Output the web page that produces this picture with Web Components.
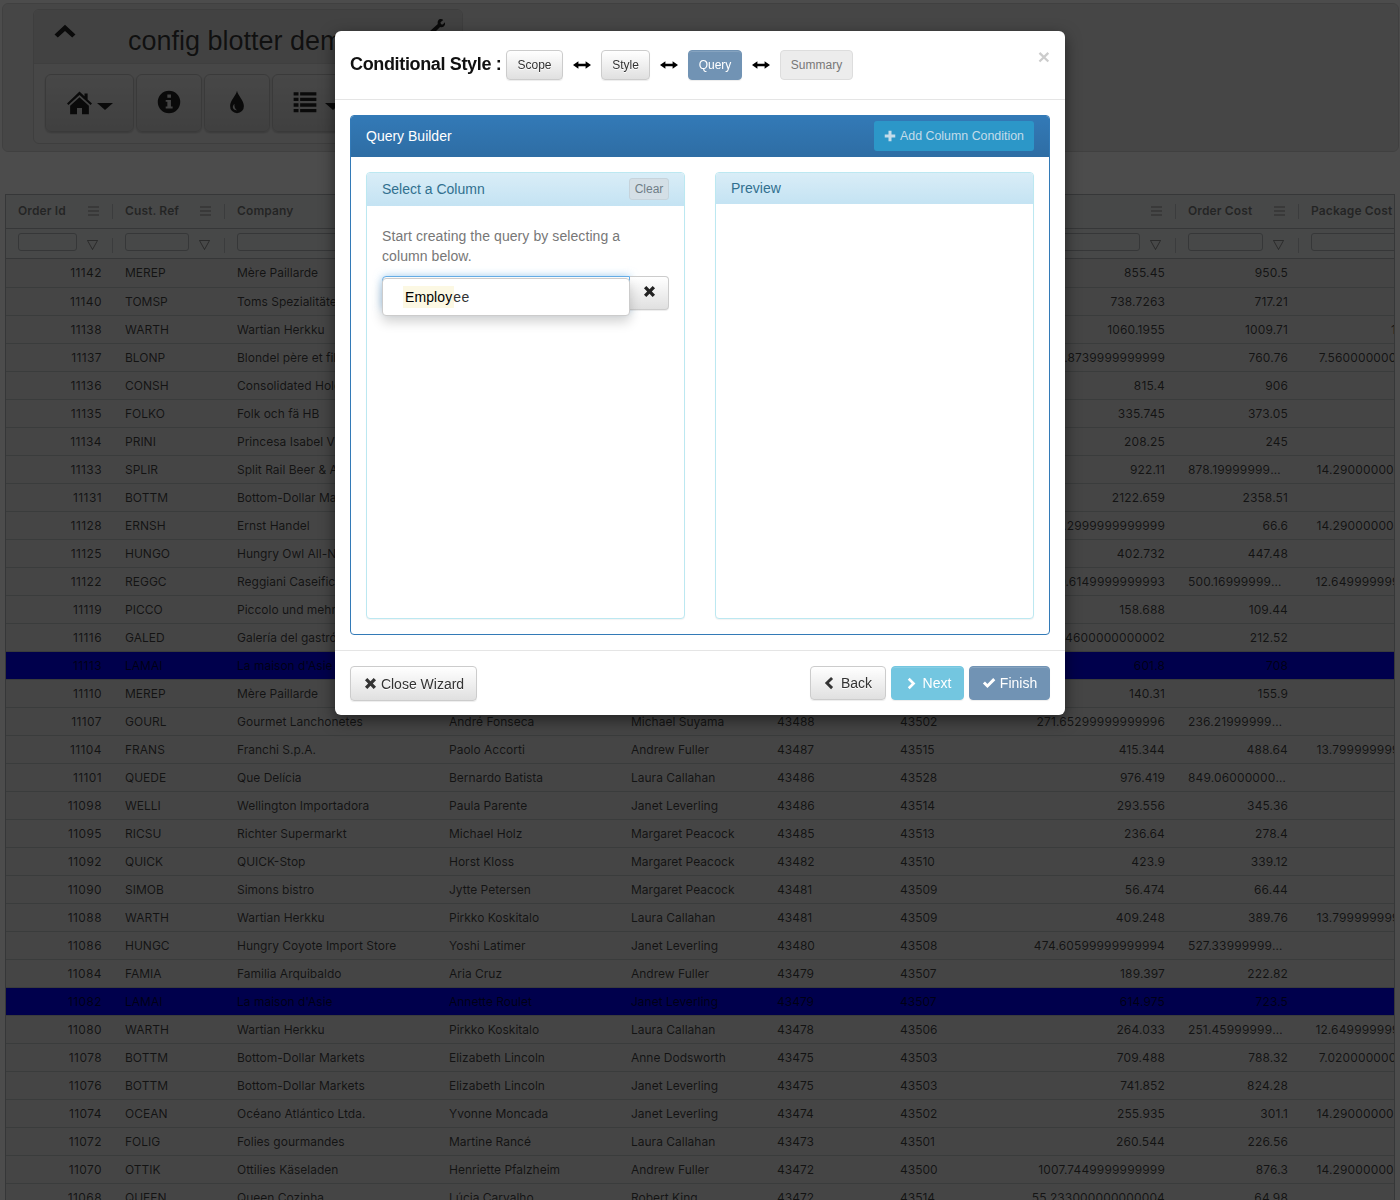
<!DOCTYPE html>
<html><head><meta charset="utf-8"><title>Conditional Style</title>
<style>
html,body{margin:0;height:1200px;overflow:hidden;background:#fff;font-family:"Liberation Sans",Arial,sans-serif}
</style></head><body>
<dash-toolbar></dash-toolbar>
<data-grid></data-grid>
<modal-backdrop></modal-backdrop>
<wizard-modal></wizard-modal>
<script>
const ICONS={
 up:'<path d="M1 10.5 8 3.5l7 7-2.2 2.2L8 8 3.2 12.7z"/>',
 down:'<path d="M0 0h10L5 6z"/>',
 home:'<path d="M8 1 11.2 4V2.2h2V6L16 8.6l-.9 1L8 3.2.9 9.6 0 8.6z"/><path d="M8 4.6 14 10v5.5H9.6v-4H6.4v4H2V10z"/>',
 info:'<path fill-rule="evenodd" d="M8 .5a7.5 7.5 0 1 1 0 15 7.5 7.5 0 0 1 0-15zM6.9 3v2.2h2.4V3zM5.8 6.6v1.3h1.1v3.1H5.8v1.4h4.6V11H9.3V6.6z"/>',
 tint:'<path fill-rule="evenodd" d="M8 .5c.7 3.4 4.6 6.4 4.6 10.2A4.6 4.6 0 0 1 8 15.5a4.6 4.6 0 0 1-4.6-4.8C3.4 6.9 7.3 3.9 8 .5zM6.3 9.2c-1 1-1.4 2.2-.8 3.2.5.8 1.5 1.3 2.5 1.1-1.2-.6-2-2.4-1.7-4.3z"/>',
 list:'<path d="M1 1.5h3v2.2H1zM5 1.5h10v2.2H5zM1 5.2h3v2.2H1zM5 5.2h10v2.2H5zM1 8.9h3v2.2H1zM5 8.9h10v2.2H5zM1 12.6h3v2.2H1zM5 12.6h10v2.2H5z"/>',
 wrench:'<path d="M11.3 1c1.1-.3 2.3 0 3.1.8l-2.6 2.3.4 1.7 1.7.4 2-2.3c.5 1.3.2 2.8-.8 3.8-1 1-2.4 1.3-3.7.8L4.4 15.2c-.8.8-2 .8-2.7.1-.8-.8-.8-2 0-2.8l7.5-6.9c-.5-1.9.2-3.9 2.1-4.6z"/>',
 remove:'<path d="M4.1 1.2 8 5.1l3.9-3.9 2.9 2.9L10.9 8l3.9 3.9-2.9 2.9L8 10.9l-3.9 3.9-2.9-2.9L5.1 8 1.2 4.1z"/>',
 plus:'<path d="M6 1h4v5h5v4h-5v5H6v-5H1V6h5z"/>',
 left:'<path d="M11.5 1 13.8 3.3 9 8l4.8 4.7-2.3 2.3L4.4 8z"/>',
 right:'<path d="M4.5 1 2.2 3.3 7 8l-4.8 4.7L4.5 15l7.1-7z"/>',
 ok:'<path d="M1 8.7 3.4 6.3 6.2 9.1 12.8 2.4 15.2 4.8 6.2 13.8z"/>',
 swap:'<path d="M4.8 3.6v3.1h6.4V3.6L16 8l-4.8 4.4V9.3H4.8v3.1L0 8z"/>'
};
class XIcon extends HTMLElement{
 constructor(){super();this.attachShadow({mode:'open'});}
 connectedCallback(){
  const s=this.getAttribute('size')||14,h=this.getAttribute('h')||s,n=this.getAttribute('name');
  const vb=n==='down'?'0 0 10 6':'0 0 16 16';
  this.shadowRoot.innerHTML=`<style>:host{display:inline-flex;line-height:0}svg{fill:currentColor;display:block}</style><svg width="${s}" height="${h}" viewBox="${vb}" preserveAspectRatio="none">${ICONS[n]}</svg>`;
 }
}
customElements.define('x-icon',XIcon);

class DashToolbar extends HTMLElement{
 constructor(){super();const r=this.attachShadow({mode:'open'});
 r.innerHTML=`<style>
 :host{display:block;margin:3px 1px 0 2px;height:149px;box-sizing:border-box;background:#ececec;border:1px solid #d8d8d8;border-radius:6px;padding:5px 30px}
 .inner{width:430px;height:135px;box-sizing:border-box;background:#efefef;border:1px solid #cfcfcf;border-radius:6px;overflow:hidden}
 .head{height:54px;background:#dedede;border-bottom:1px solid #d2d2d2;box-sizing:border-box;display:flex;align-items:flex-start;position:relative;color:#222}
 .chev{margin:10px 0 0 19px;width:24px}
 h1{margin:15px 0 0 51px;font:400 27px/32px "Liberation Sans",Arial,sans-serif;color:rgba(0,0,0,.75);white-space:nowrap}
 .wr{position:absolute;left:394px;top:8px}
 .btns{display:flex;gap:2px;padding:10px 0 0 11px}
 .b{height:58px;box-sizing:border-box;border:1px solid #c4c4c4;border-radius:6px;background:linear-gradient(#eee,#d6d6d6);display:flex;align-items:center;justify-content:center;gap:5px;color:#222;box-shadow:0 1px 2px rgba(0,0,0,.2);padding-bottom:2px}
 .car{margin-top:8px}
 .l{justify-content:flex-start;padding-left:19px;gap:7px}
 </style>
 <div class="inner"><div class="head"><x-icon class="chev" name="up" size="24" h="22"></x-icon><h1>config blotter demo</h1><x-icon class="wr" name="wrench" size="17"></x-icon></div>
 <div class="btns">
 <div class="b" style="width:89px"><x-icon name="home" size="25" h="25"></x-icon><x-icon class="car" name="down" size="16" h="7"></x-icon></div>
 <div class="b" style="width:66px"><x-icon name="info" size="24"></x-icon></div>
 <div class="b" style="width:66px"><x-icon name="tint" size="24"></x-icon></div>
 <div class="b l" style="width:90px"><x-icon name="list" size="26" h="24"></x-icon><x-icon class="car" name="down" size="16" h="7"></x-icon></div>
 </div></div>`;}
}
customElements.define('dash-toolbar',DashToolbar);

const D=`11142|MEREP|Mère Paillarde|||||855.45|950.5|
11140|TOMSP|Toms Spezialitäten|||||738.7263|717.21|
11138|WARTH|Wartian Herkku|||||1060.1955|1009.71|10.459111
11137|BLONP|Blondel père et fils|||||684.8739999999999|760.76|7.5600000000000011
11136|CONSH|Consolidated Holdings|||||815.4|906|
11135|FOLKO|Folk och fä HB|||||335.745|373.05|
11134|PRINI|Princesa Isabel Vinhos|||||208.25|245|
11133|SPLIR|Split Rail Beer & Ale|||||922.11|878.19999999999|14.290000000000001
11131|BOTTM|Bottom-Dollar Markets|||||2122.659|2358.51|
11128|ERNSH|Ernst Handel|||||719.2999999999999|66.6|14.290000000000001
11125|HUNGO|Hungry Owl All-Night Grocers|||||402.732|447.48|
11122|REGGC|Reggiani Caseifici|||||450.6149999999993|500.16999999999|12.649999999999999
11119|PICCO|Piccolo und mehr|||||158.688|109.44|
11116|GALED|Galería del gastrónomo|||||191.4600000000002|212.52|
11113|LAMAI|La maison d'Asie|||||601.8|708|
11110|MEREP|Mère Paillarde|||||140.31|155.9|
11107|GOURL|Gourmet Lanchonetes|André Fonseca|Michael Suyama|43488|43502|271.65299999999996|236.21999999999|
11104|FRANS|Franchi S.p.A.|Paolo Accorti|Andrew Fuller|43487|43515|415.344|488.64|13.799999999999999
11101|QUEDE|Que Delícia|Bernardo Batista|Laura Callahan|43486|43528|976.419|849.06000000000|
11098|WELLI|Wellington Importadora|Paula Parente|Janet Leverling|43486|43514|293.556|345.36|
11095|RICSU|Richter Supermarkt|Michael Holz|Margaret Peacock|43485|43513|236.64|278.4|
11092|QUICK|QUICK-Stop|Horst Kloss|Margaret Peacock|43482|43510|423.9|339.12|
11090|SIMOB|Simons bistro|Jytte Petersen|Margaret Peacock|43481|43509|56.474|66.44|
11088|WARTH|Wartian Herkku|Pirkko Koskitalo|Laura Callahan|43481|43509|409.248|389.76|13.799999999999999
11086|HUNGC|Hungry Coyote Import Store|Yoshi Latimer|Janet Leverling|43480|43508|474.60599999999994|527.33999999999|
11084|FAMIA|Familia Arquibaldo|Aria Cruz|Andrew Fuller|43479|43507|189.397|222.82|
11082|LAMAI|La maison d'Asie|Annette Roulet|Janet Leverling|43479|43507|614.975|723.5|
11080|WARTH|Wartian Herkku|Pirkko Koskitalo|Laura Callahan|43478|43506|264.033|251.45999999999|12.649999999999999
11078|BOTTM|Bottom-Dollar Markets|Elizabeth Lincoln|Anne Dodsworth|43475|43503|709.488|788.32|7.0200000000000011
11076|BOTTM|Bottom-Dollar Markets|Elizabeth Lincoln|Janet Leverling|43475|43503|741.852|824.28|
11074|OCEAN|Océano Atlántico Ltda.|Yvonne Moncada|Janet Leverling|43474|43502|255.935|301.1|14.290000000000001
11072|FOLIG|Folies gourmandes|Martine Rancé|Laura Callahan|43473|43501|260.544|226.56|
11070|OTTIK|Ottilies Käseladen|Henriette Pfalzheim|Andrew Fuller|43472|43500|1007.7449999999999|876.3|14.290000000000001
11068|QUEEN|Queen Cozinha|Lúcia Carvalho|Robert King|43472|43514|55.233000000000004|64.98|`.split('\n').map(l=>l.split('|'));
const COLS=['Order Id','Cust. Ref','Company','','','','','','Order Cost','Package Cost'];
const RIGHT=new Set([0,7,8,9]);
const esc=s=>s.replace(/&/g,'&amp;');
const menu='<svg class="m" width="11" height="10" viewBox="0 0 11 10"><path d="M0 1h11M0 5h11M0 9h11" stroke="currentColor" fill="none"/></svg>';
const funnel='<svg class="f" width="11" height="10" viewBox="0 0 11 10"><path d="M.5.5h10L5.5 9.5z" stroke="currentColor" fill="none"/></svg>';
class DataGrid extends HTMLElement{
 constructor(){super();const r=this.attachShadow({mode:'open'});
 const hdr=COLS.map((c,i)=>`<div class="hc">${c?`<span class="t">${c}</span>`:''}${i<9&&i!=2?menu:''}<i class="sep"></i></div>`).join('');
 const flt=COLS.map((c,i)=>`<div class="fc"><span class="inp"></span>${i<9?funnel:''}<i class="sep"></i></div>`).join('');
 const rows=D.map(d=>`<div class="row${d[0]=='11113'||d[0]=='11082'?' hi':''}">`+d.map((v,i)=>`<div class="c${RIGHT.has(i)?' r':''}">${esc(v)}</div>`).join('')+'</div>').join('');
 r.innerHTML=`<style>
 :host{display:block;margin:42px 0 0 5px;width:1390px;height:1006px;box-sizing:border-box;border:1px solid #b4b9bc;border-bottom:0;overflow:hidden;font:400 12px/16px Inter,"Noto Sans",sans-serif;background:#fff}
 .hr,.fr,.row{display:grid;grid-template-columns:107px 112px 212px 182px 146px 123px 112px 176px 123px 157px;width:1450px}
 .hr{height:33px;border-bottom:1px solid #b4b9bc;background:#eef0f0}
 .fr{height:29px;border-bottom:1px solid #b4b9bc;background:#eef0f0}
 .hc,.fc{position:relative;display:flex;align-items:center;padding:0 14px 0 12px;justify-content:space-between;color:rgba(0,0,0,.4)}
 .hc{padding-bottom:2px}
 .t{font-weight:600;letter-spacing:.12px;white-space:nowrap;color:rgba(0,0,0,.5)}
 .m{margin-left:auto}.f{margin-left:auto;margin-right:1px}
 .fc{align-items:flex-start;padding-top:4px}
 .inp{display:block;width:calc(100% - 22px);flex:none;height:18px;box-sizing:border-box;border:1px solid #b4b9bc;border-radius:3px;background:#eef0f0}
 .fc .f{margin-top:7px}
 .sep{position:absolute;right:0;top:9px;height:15px;width:1px;background:rgba(170,175,180,.6)}
 .row{height:28px;box-sizing:border-box;border-bottom:1px solid #c4c8ca;background:#e8e8e8}
 .row:first-of-type{height:29px}
 .row.hi{background:#00f}
 .c{padding:6px 11px 0 12px;overflow:hidden;white-space:nowrap;text-overflow:ellipsis;color:rgba(0,0,0,.72)}
 .c.r{text-align:right;letter-spacing:.13px}
 .c:first-child{letter-spacing:.4px}
 </style><div class="hr">${hdr}</div><div class="fr">${flt}</div><div class="rows">${rows}</div>`;}
}
customElements.define('data-grid',DataGrid);

class ModalBackdrop extends HTMLElement{
 constructor(){super();this.attachShadow({mode:'open'}).innerHTML='<style>:host{position:fixed;inset:0;background:rgba(0,0,0,.7);display:block}</style>';}
}
customElements.define('modal-backdrop',ModalBackdrop);

class WizBtn extends HTMLElement{
 constructor(){super();this.attachShadow({mode:'open'}).innerHTML=`<style>
 :host{display:inline-flex;align-items:center;justify-content:center;gap:4px;box-sizing:border-box;height:34px;border:1px solid #ccc;border-radius:4px;background:linear-gradient(#fff,#e0e0e0);color:#333;font-size:14px;padding:0 12px;white-space:nowrap;text-shadow:0 1px 0 #fff;box-shadow:inset 0 1px 0 rgba(255,255,255,.15),0 1px 1px rgba(0,0,0,.075)}
 :host([small]){height:30px;font-size:12px;padding:0 10px}
 :host([kind=cur]){background:#7193b4;border-color:#7193b4;color:#fff;text-shadow:none}
 :host([kind=off]){background:#ececec;border-color:#ddd;color:#777;box-shadow:none;text-shadow:none}
 :host([kind=next]){background:#73c6e0;border-color:#73c6e0;color:#fff;text-shadow:none}
 </style><slot></slot>`;}
}
customElements.define('wiz-btn',WizBtn);

class SubPanel extends HTMLElement{
 constructor(){super();this.attachShadow({mode:'open'}).innerHTML=`<style>
 :host{display:flex;flex-direction:column;box-sizing:border-box;height:447px;border:1px solid #bce8f1;border-radius:4px;background:#fff;box-shadow:0 1px 1px rgba(0,0,0,.05);overflow:hidden}
 .h{display:flex;align-items:center;justify-content:space-between;height:var(--hh,31px);flex:none;box-sizing:border-box;padding:0 15px 2px;background:linear-gradient(#d9edf7,#c4e3f3);color:#31708f;font-size:14px}
 .b{padding:var(--pad,0);flex:1}
 </style><div class="h"><span><slot name="title"></slot></span><slot name="tool"></slot></div><div class="b"><slot></slot></div>`;}
}
customElements.define('sub-panel',SubPanel);

class ColumnPicker extends HTMLElement{
 constructor(){super();this.attachShadow({mode:'open'}).innerHTML=`<style>
 :host{display:block;position:relative;height:34px;margin-top:10px}
 .ig{display:flex;height:34px}
 .in{width:248px;box-sizing:border-box;border:1px solid #66afe9;border-radius:4px 0 0 4px;background:#fff;box-shadow:0 0 8px rgba(102,175,233,.6)}
 .x{flex:1;border:1px solid #ccc;border-left:0;border-radius:0 4px 4px 0;background:linear-gradient(#fff,#e0e0e0);display:flex;align-items:center;justify-content:center;color:#222;box-shadow:0 1px 1px rgba(0,0,0,.075);padding-bottom:3px;box-sizing:border-box}
 .menu{position:absolute;left:0;top:2px;width:248px;height:38px;box-sizing:border-box;background:#fff;border:1px solid #ccc;border-radius:4px;box-shadow:0 6px 12px rgba(0,0,0,.175);padding:7px 0 0 20px;font-size:14px;line-height:22px;color:#333;white-space:nowrap}
 mark{display:inline-block;background:#fcf8e3;color:#000;padding:0 2px 0 2px;margin-right:-1px;letter-spacing:.1px}
 span{letter-spacing:.4px}
 </style><div class="ig"><div class="in"></div><div class="x"><x-icon name="remove" size="13"></x-icon></div></div>
 <div class="menu"><mark>Employ</mark><span>ee</span></div>`;}
}
customElements.define('column-picker',ColumnPicker);

class WizardModal extends HTMLElement{
 constructor(){super();this.attachShadow({mode:'open'}).innerHTML=`<style>
 :host{position:absolute;left:335px;top:31px;width:730px;height:684px;background:#fff;border-radius:6px;box-shadow:0 5px 15px rgba(0,0,0,.5);display:flex;flex-direction:column;color:#333;font:14px/20px "Liberation Sans",Arial,sans-serif}
 header{height:69px;flex:none;box-sizing:border-box;border-bottom:1px solid #e5e5e5;padding:19px 15px 0;display:flex;align-items:flex-start;position:relative}
 h4{margin:4px 5px 0 0;font:700 18px/20px "Liberation Sans",Arial,sans-serif;color:#111;white-space:nowrap;letter-spacing:-.35px;width:151px;flex:none}
 .sw{width:38px;display:flex;justify-content:center;margin-top:8px;color:#000;height:14px}
 .close{position:absolute;right:15px;top:15px;font:700 21px/21px "Liberation Sans",Arial,sans-serif;color:#000;opacity:.2}
 main{flex:1;padding:15px 15px 15px}
 .qb{height:520px;box-sizing:border-box;border:1px solid #337ab7;border-radius:4px;overflow:hidden;background:#fff}
 .qh{height:42px;margin:-1px -1px 0;background:linear-gradient(#337ab7,#2e6da4);color:#fff;display:flex;align-items:center;justify-content:space-between;padding:0 16px 0 16px;font-size:14px}
 .add{width:160px;height:30px;box-sizing:border-box;background:#2c97c8;border-radius:3px;color:#c3dcea;font-size:12.4px;display:flex;align-items:center;justify-content:center;gap:4px;white-space:nowrap}
 .cols{display:grid;grid-template-columns:319px 319px;gap:30px;padding:15px 15px 0}
 .clear{display:flex;align-items:center;justify-content:center;width:40px;height:22px;box-sizing:border-box;background:#d4dfe6;border:1px solid #c6d3db;border-radius:3px;color:#6f7e86;font-size:12px}
 p{margin:0;color:#777;font-size:14px;line-height:20px;max-width:250px;letter-spacing:.08px}
 footer{height:65px;flex:none;box-sizing:border-box;border-top:1px solid #e5e5e5;padding:15px;display:flex;align-items:flex-start}
 .gap{flex:1}
 .fb{display:flex;gap:5px}
 </style>
 <header><h4>Conditional Style :</h4>
 <wiz-btn small style="width:57px">Scope</wiz-btn><div class="sw"><x-icon name="swap" size="18" h="14"></x-icon></div>
 <wiz-btn small style="width:49px">Style</wiz-btn><div class="sw"><x-icon name="swap" size="18" h="14"></x-icon></div>
 <wiz-btn small kind="cur" style="width:54px">Query</wiz-btn><div class="sw"><x-icon name="swap" size="18" h="14"></x-icon></div>
 <wiz-btn small kind="off" style="width:73px">Summary</wiz-btn>
 <span class="close">×</span></header>
 <main><div class="qb"><div class="qh"><span>Query Builder</span><div class="add"><x-icon name="plus" size="12"></x-icon><span>Add Column Condition</span></div></div>
 <div class="cols">
 <sub-panel style="--hh:33px;--pad:20px 15px"><span slot="title">Select a Column</span><span slot="tool" class="clear">Clear</span>
 <p>Start creating the query by selecting a column below.</p><column-picker></column-picker></sub-panel>
 <sub-panel><span slot="title">Preview</span></sub-panel>
 </div></div></main>
 <footer><wiz-btn style="width:127px;height:35px;padding-left:13px"><x-icon name="remove" size="13"></x-icon>Close Wizard</wiz-btn><span class="gap"></span>
 <div class="fb"><wiz-btn style="width:76px;gap:6px;padding:0 3px 0 0"><x-icon name="left" size="14"></x-icon>Back</wiz-btn>
 <wiz-btn kind="next" style="width:73px;padding-left:14px"><x-icon name="right" size="13"></x-icon>Next</wiz-btn>
 <wiz-btn kind="cur" style="width:81px"><x-icon name="ok" size="14"></x-icon>Finish</wiz-btn></div></footer>`;}
}
customElements.define('wizard-modal',WizardModal);
</script></body></html>
